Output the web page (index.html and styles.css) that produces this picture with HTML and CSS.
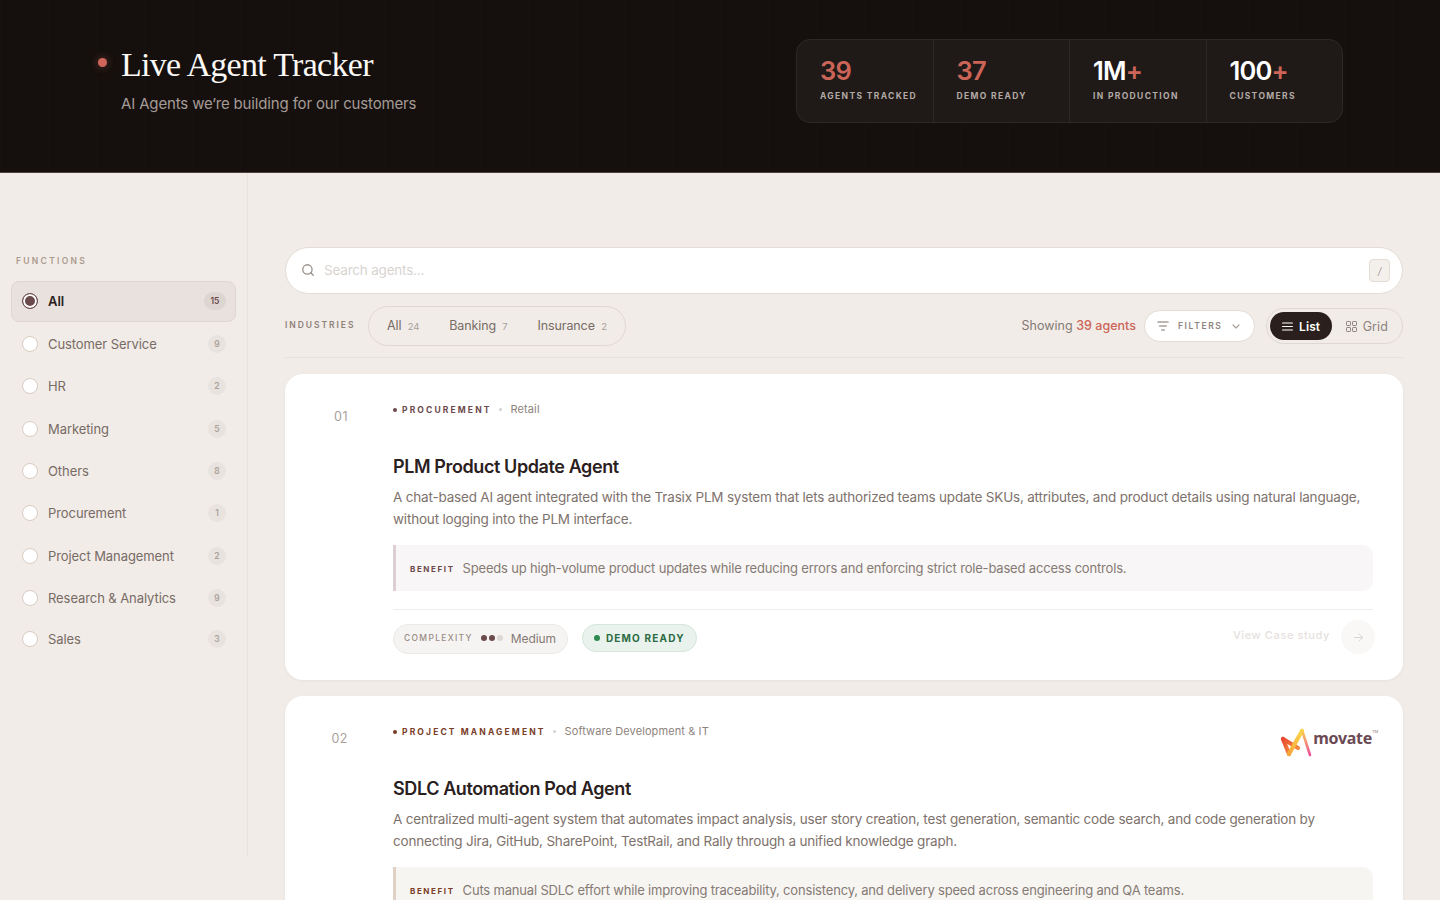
FILE: index.html
```html
<!DOCTYPE html>
<html lang="en">
  <head>
    <meta charset="UTF-8" />
    <meta name="viewport" content="width=device-width, initial-scale=1.0" />
    <title>Live Agent Tracker</title>
    <link rel="stylesheet" href="styles.css">
  </head>
  <body>
    <header class="hero">
      <div class="hero-title">
        <span class="live-dot"></span>
        <div>
          <h1>Live Agent Tracker</h1>
          <p>AI Agents we’re building for our customers</p>
        </div>
      </div>
      <div class="stats">
        <div class="stat">
          <div class="stat-num accent">39</div>
          <div class="stat-label">AGENTS TRACKED</div>
        </div>
        <div class="stat">
          <div class="stat-num accent">37</div>
          <div class="stat-label">DEMO READY</div>
        </div>
        <div class="stat">
          <div class="stat-num">1M<span class="accent">+</span></div>
          <div class="stat-label">IN PRODUCTION</div>
        </div>
        <div class="stat">
          <div class="stat-num">100<span class="accent">+</span></div>
          <div class="stat-label">CUSTOMERS</div>
        </div>
      </div>
    </header>

    <div class="page">
      <aside class="sidebar">
        <div class="side-title">FUNCTIONS</div>
        <div class="fn fn-active"><span class="radio"></span><span class="fn-name">All</span><span class="fn-count">15</span></div>
        <div class="fn"><span class="radio"></span><span class="fn-name">Customer Service</span><span class="fn-count">9</span></div>
        <div class="fn"><span class="radio"></span><span class="fn-name">HR</span><span class="fn-count">2</span></div>
        <div class="fn"><span class="radio"></span><span class="fn-name">Marketing</span><span class="fn-count">5</span></div>
        <div class="fn"><span class="radio"></span><span class="fn-name">Others</span><span class="fn-count">8</span></div>
        <div class="fn"><span class="radio"></span><span class="fn-name">Procurement</span><span class="fn-count">1</span></div>
        <div class="fn"><span class="radio"></span><span class="fn-name">Project Management</span><span class="fn-count">2</span></div>
        <div class="fn"><span class="radio"></span><span class="fn-name">Research &amp; Analytics</span><span class="fn-count">9</span></div>
        <div class="fn fn-last"><span class="radio"></span><span class="fn-name">Sales</span><span class="fn-count">3</span></div>
      </aside>

      <main class="main">
        <div class="search">
          <svg class="search-icon" width="14" height="14" viewBox="0 0 24 24" fill="none" stroke="#9a8f89" stroke-width="2.2" stroke-linecap="round"><circle cx="11" cy="11" r="8"></circle><path d="M21 21l-4.3-4.3"></path></svg>
          <span class="search-text">Search agents...</span>
          <span class="kbd">/</span>
        </div>

        <div class="toolbar">
          <span class="ind-title">INDUSTRIES</span>
          <div class="ind-pills">
            <span class="ind">All <small>24</small></span>
            <span class="ind">Banking <small>7</small></span>
            <span class="ind">Insurance <small>2</small></span>
          </div>
          <span class="showing">Showing <b>39 agents</b></span>
          <div class="filters">
            <svg width="12" height="10" viewBox="0 0 12 10" fill="none" stroke="#7d716b" stroke-width="1.2" stroke-linecap="round"><path d="M.8 1h10.4M2.6 5h6.8M4.6 9h2.8"></path></svg>
            <span>FILTERS</span>
            <svg width="8" height="5" viewBox="0 0 8 5" fill="none" stroke="#a79c96" stroke-width="1.1" stroke-linecap="round" stroke-linejoin="round"><path d="M1 1l3 3 3-3"></path></svg>
          </div>
          <div class="view-toggle">
            <span class="view view-on">
              <svg width="11" height="9" viewBox="0 0 11 9" fill="none" stroke="#fff" stroke-width="1.2" stroke-linecap="round"><path d="M.6 1h9.8M.6 4.500h9.800M.6 8h9.800"></path></svg>
              List
            </span>
            <span class="view">
              <svg width="11" height="11" viewBox="0 0 11 11" fill="none" stroke="#8d817b" stroke-width="1"><rect x=".5" y=".5" width="4" height="4" rx=".7"></rect><rect x="6.500" y=".5" width="4" height="4" rx=".7"></rect><rect x=".5" y="6.500" width="4" height="4" rx=".7"></rect><rect x="6.500" y="6.500" width="4" height="4" rx=".7"></rect></svg>
              Grid
            </span>
          </div>
        </div>

        <article class="card">
          <div class="card-num">01</div>
          <div class="card-body">
            <div class="meta">
              <span class="meta-dot"></span><span class="meta-fn">PROCUREMENT</span>
              <span class="meta-sep"></span><span class="meta-ind">Retail</span>
            </div>
            <h3>PLM Product Update Agent</h3>
            <p class="desc">A chat-based AI agent integrated with the Trasix PLM system that lets authorized teams update SKUs, attributes, and product details using natural language, without logging into the PLM interface.</p>
            <div class="benefit"><span class="benefit-tag">BENEFIT</span>Speeds up high-volume product updates while reducing errors and enforcing strict role-based access controls.</div>
            <div class="card-foot">
              <span class="complexity">
                <span class="cx-label">COMPLEXITY</span>
                <span class="cx-dots"><i></i><i></i><i class="off"></i></span>
                Medium
              </span>
              <span class="status"><i></i>DEMO READY</span>
              <span class="case-link">View Case study</span>
              <span class="case-arrow">
                <svg width="11" height="11" viewBox="0 0 24 24" fill="none" stroke="#d9d2ce" stroke-width="2" stroke-linecap="round" stroke-linejoin="round"><path d="M3 12h18M13 4l8 8-8 8"></path></svg>
              </span>
            </div>
          </div>
        </article>

        <article class="card">
          <div class="card-num">02</div>
          <div class="card-body">
            <div class="logo">
              <svg width="33" height="30" viewBox="0 0 33 30" fill="none" stroke-width="4.200" stroke-linecap="round" stroke-linejoin="round">
                <defs>
                  <linearGradient id="mvA" x1="0" y1="0" x2="1" y2="1"><stop offset="0" stop-color="#e8472f"></stop><stop offset="1" stop-color="#f58a3c"></stop></linearGradient>
                  <linearGradient id="mvB" x1="0" y1="1" x2="1" y2="0"><stop offset="0" stop-color="#f7a63b"></stop><stop offset="1" stop-color="#fbd94a"></stop></linearGradient>
                  <linearGradient id="mvC" x1="0" y1="0" x2="0" y2="1"><stop offset="0" stop-color="#fbd24a"></stop><stop offset="1" stop-color="#ec4f9c"></stop></linearGradient>
                </defs>
                <path d="M3 12l15 9" stroke="url(#mvA)"></path>
                <path d="M3 12l6 15" stroke="url(#mvA)"></path>
                <path d="M9 27L22 4" stroke="url(#mvB)"></path>
                <path d="M22 3l8 25" stroke="url(#mvC)" stroke-width="2.600"></path>
              </svg>
              <span class="logo-text">movate</span><span class="logo-tm">TM</span>
            </div>
            <div class="meta">
              <span class="meta-dot brown"></span><span class="meta-fn brown">PROJECT MANAGEMENT</span>
              <span class="meta-sep"></span><span class="meta-ind">Software Development &amp; IT</span>
            </div>
            <h3>SDLC Automation Pod Agent</h3>
            <p class="desc">A centralized multi-agent system that automates impact analysis, user story creation, test generation, semantic code search, and code generation by connecting Jira, GitHub, SharePoint, TestRail, and Rally through a unified knowledge graph.</p>
            <div class="benefit benefit-tan"><span class="benefit-tag">BENEFIT</span>Cuts manual SDLC effort while improving traceability, consistency, and delivery speed across engineering and QA teams.</div>
          </div>
        </article>
      </main>
    </div>
  </body>
</html>
```

FILE: styles.css
```css
* {
  box-sizing: border-box;
}

html,
body {
  height: 100%;
}

body {
  margin: 0;
  overflow: hidden;
  background-color: #f1ece8;
  font-family: Inter, "Noto Sans", sans-serif;
  color: #2a201d;
}

/* top band */
.hero {
  height: 173px;
  padding: 39px 97px 0 98px;
  display: flex;
  justify-content: space-between;
  align-items: flex-start;
  background-color: #15100d;
  background-image: repeating-linear-gradient(90deg, rgba(255, 255, 255, 0.008) 0 1px, transparent 1px 48px);
  border-bottom: 1px solid #4a4340;
}

.hero-title {
  display: flex;
  align-items: flex-start;
  gap: 14px;
  padding-top: 5px;
}

.live-dot {
  width: 9px;
  height: 9px;
  margin-top: 14px;
  border-radius: 50%;
  background-color: #d0665a;
  box-shadow: 0 0 8px rgba(208, 102, 90, 0.45);
}

.hero h1 {
  margin: 0;
  font-family: "Liberation Serif", serif;
  font-size: 34px;
  line-height: 42px;
  font-weight: 400;
  letter-spacing: -0.7px;
  color: #fbf8f5;
}

.hero p {
  margin: 8px 0 0;
  font-size: 15px;
  line-height: 20px;
  letter-spacing: -0.15px;
  color: #a59b96;
}

.stats {
  display: flex;
  width: 547px;
  height: 84px;
  background-color: #1f1917;
  border: 1px solid #2e2825;
  border-radius: 14px;
}

.stat {
  flex: 1;
  padding: 14px 0 0 23px;
  border-left: 1px solid #2e2825;
}

.stat:first-child {
  border-left: 0;
}

.stat-num {
  font-size: 25.500px;
  line-height: 33px;
  font-weight: 600;
  letter-spacing: -0.8px;
  color: #fff;
}

.accent {
  color: #cc6557;
}

.stat-label {
  margin-top: 3px;
  font-size: 8.500px;
  line-height: 12px;
  font-weight: 700;
  letter-spacing: 1.35px;
  color: #b3aaa5;
}

/* page columns */
.page {
  display: flex;
  align-items: flex-start;
}

.sidebar {
  width: 248px;
  height: 683px;
  flex-shrink: 0;
  padding: 82px 11px 0;
  border-right: 1px solid #e9e3de;
}

.side-title {
  margin: 0 0 13.600px 5px;
  font-size: 8.500px;
  line-height: 12px;
  font-weight: 600;
  letter-spacing: 2.3px;
  color: #ab9a8d;
}

.fn {
  height: 42.400px;
  padding: 0 10px 0 11px;
  display: flex;
  align-items: center;
  font-size: 13px;
  letter-spacing: -0.08px;
  color: #786b65;
}

.fn-last {
  height: 39px;
}

.fn-active {
  height: 41px;
  margin-bottom: 1px;
  background-color: #e9e1dd;
  border: 1px solid #e0d6d1;
  border-radius: 8px;
  padding: 0 9px 0 10px;
  font-weight: 560;
  color: #2a201d;
}

.radio {
  width: 16px;
  height: 16px;
  margin-right: 10px;
  flex-shrink: 0;
  background-color: #fff;
  border: 1px solid #d9ccc0;
  border-radius: 50%;
}

.fn-active .radio {
  border: 1.500px solid #6b4a4c;
  background-color: #6b4a4c;
  box-shadow: inset 0 0 0 2px #fff;
}

.fn-name {
  flex: 1;
}

.fn-count {
  min-width: 18px;
  height: 18px;
  padding: 0 4px;
  display: flex;
  align-items: center;
  justify-content: center;
  background-color: #e8e3df;
  border-radius: 9px;
  font-size: 8.500px;
  font-weight: 600;
  letter-spacing: 0;
  color: #aaa19b;
}

.fn-active .fn-count {
  min-width: 22px;
  background-color: #ddd5d0;
  color: #6b4a4c;
}

.main {
  flex: 1;
  padding: 74px 37px 0;
  min-width: 0;
}

/* search + filters */
.search {
  height: 47px;
  padding: 0 12px 0 15px;
  display: flex;
  align-items: center;
  background-color: #fff;
  border: 1px solid #e4dcd4;
  border-radius: 24px;
}

.search-icon {
  flex-shrink: 0;
  margin-bottom: 1px;
}

.search-text {
  flex: 1;
  margin-left: 9px;
  padding-bottom: 1px;
  font-size: 13.500px;
  letter-spacing: -0.2px;
  color: #d9d4d0;
}

.kbd {
  width: 21px;
  height: 23px;
  display: flex;
  align-items: center;
  justify-content: center;
  background-color: #f3efeb;
  border: 1px solid #e4dcd4;
  border-radius: 4px;
  font-size: 10px;
  font-style: italic;
  color: #a59a94;
}

.toolbar {
  height: 64px;
  margin-bottom: 16px;
  padding-top: 12px;
  display: flex;
  align-items: flex-start;
  border-bottom: 1px solid #e7e1dc;
}

.ind-title {
  width: 83px;
  margin-top: 13px;
  font-size: 8.500px;
  line-height: 13px;
  font-weight: 600;
  letter-spacing: 1.95px;
  color: #8f8078;
}

.ind-pills {
  height: 40px;
  padding: 0 18px 2px;
  display: flex;
  align-items: center;
  gap: 30px;
  border: 1px solid #e0d8d0;
  border-radius: 20px;
}

.ind {
  font-size: 12.500px;
  letter-spacing: -0.12px;
  color: #786b65;
}

.ind small {
  margin-left: 3px;
  font-size: 9.500px;
  color: #a89e98;
}

.showing {
  margin-left: auto;
  margin-top: 11px;
  font-size: 12.500px;
  line-height: 18px;
  letter-spacing: 0.02px;
  color: #857a74;
}

.showing b {
  font-weight: 500;
  color: #cc6557;
}

.filters {
  width: 111px;
  height: 32px;
  margin: 4px 11px 0 8px;
  padding: 0 14px 0 12px;
  display: flex;
  align-items: center;
  gap: 9px;
  background-color: #fff;
  border: 1px solid #e4dcd4;
  border-radius: 16px;
  font-size: 8.500px;
  font-weight: 600;
  letter-spacing: 1.6px;
  color: #8f837d;
}

.filters svg {
  flex-shrink: 0;
}

.filters span {
  flex: 1;
}

.view-toggle {
  width: 137px;
  height: 36px;
  margin-top: 2px;
  padding: 2px 3px;
  display: flex;
  align-items: center;
  border: 1px solid #e0d8d0;
  border-radius: 18px;
}

.view {
  height: 28px;
  padding: 0 11px;
  display: flex;
  align-items: center;
  gap: 6px;
  border-radius: 14px;
  font-size: 12.500px;
  letter-spacing: 0.1px;
  color: #8d817b;
}

.view-on {
  width: 62px;
  padding: 0 0 0 12px;
  background-color: #2a1f1c;
  font-size: 12px;
  font-weight: 600;
  color: #fff;
}

.view-toggle .view:last-child {
  padding-left: 12px;
  margin-left: 2px;
}

/* agent cards */
.card {
  margin-bottom: 16px;
  padding: 26px 30px 26px 0;
  display: flex;
  background-color: #fff;
  border-radius: 18px;
  box-shadow: 0 1px 3px rgba(90, 70, 60, 0.06);
}

.card-num {
  width: 108px;
  padding: 9px 45px 0 0;
  flex-shrink: 0;
  text-align: right;
  font-size: 12.500px;
  line-height: 16px;
  letter-spacing: 0.5px;
  color: #a9a19c;
}

.card-body {
  position: relative;
  flex: 1;
  min-width: 0;
}

.meta {
  height: 19px;
  display: flex;
  align-items: center;
  font-size: 8.500px;
}

.meta-dot {
  width: 4px;
  height: 4px;
  margin-right: 5px;
  border-radius: 50%;
  background-color: #6b4a4c;
}

.meta-fn {
  font-weight: 700;
  letter-spacing: 2.13px;
  color: #6b4a4c;
}

.meta-dot.brown {
  background-color: #7a3d28;
}

.meta-fn.brown {
  color: #7a3d28;
}

.meta-sep {
  width: 3px;
  height: 3px;
  margin: 0 9px 0 7px;
  border-radius: 50%;
  background-color: #d6d0cc;
}

.meta-ind {
  padding-bottom: 1px;
  font-size: 11px;
  letter-spacing: 0.1px;
  color: #8d837d;
}

.card h3 {
  margin: 35px 0 0;
  font-size: 18px;
  line-height: 26px;
  font-weight: 560;
  letter-spacing: -0.4px;
  color: #2a201d;
}

.desc {
  margin: 6px 0 0;
  font-size: 13.500px;
  line-height: 22px;
  letter-spacing: -0.19px;
  color: #7e726c;
}

.benefit {
  height: 46px;
  margin-top: 15px;
  padding: 0 14px 1px;
  display: flex;
  align-items: center;
  background-color: #f8f6f6;
  border-left: 3px solid #dccfd1;
  border-radius: 0 10px 10px 0;
  font-size: 13px;
  letter-spacing: -0.18px;
  color: #857a74;
}

.benefit-tan {
  background-color: #f7f5f2;
  border-left-color: #e0d0c6;
}

.benefit-tag {
  margin-right: 8px;
  padding-top: 2px;
  font-size: 8px;
  font-weight: 700;
  letter-spacing: 1.6px;
  color: #6b4a4c;
}

.benefit-tan .benefit-tag {
  color: #7a3d28;
}

.card-foot {
  margin-top: 18px;
  padding-top: 14px;
  display: flex;
  align-items: flex-start;
  border-top: 1px solid #f0ecea;
}

.complexity {
  height: 30px;
  padding: 0 11px 2px 10px;
  display: flex;
  align-items: center;
  background-color: #f6f4f3;
  border: 1px solid #ece8e5;
  border-radius: 15px;
  font-size: 12px;
  letter-spacing: -0.1px;
  color: #857a74;
}

.cx-label {
  font-size: 8.500px;
  font-weight: 500;
  letter-spacing: 1.3px;
  color: #9a8c85;
}

.cx-dots {
  margin: 0 8px;
  display: flex;
  gap: 2px;
}

.cx-dots i {
  width: 6px;
  height: 6px;
  border-radius: 50%;
  background-color: #6b4a4c;
}

.cx-dots i.off {
  background-color: #dcd8d5;
}

.status {
  height: 28px;
  margin-left: 14px;
  padding: 0 11px 0 11px;
  display: flex;
  align-items: center;
  background-color: #e9f2ec;
  border: 1px solid #d5e6da;
  border-radius: 14px;
  font-size: 10px;
  font-weight: 700;
  letter-spacing: 1.2px;
  color: #2d6a43;
}

.status i {
  width: 6px;
  height: 6px;
  margin-right: 6px;
  border-radius: 50%;
  background-color: #2f8a50;
}

.case-link {
  margin-left: auto;
  margin-top: 4px;
  font-size: 11px;
  font-weight: 500;
  letter-spacing: 0.6px;
  color: #e6e1de;
}

.case-arrow {
  width: 34px;
  height: 34px;
  margin: -4px -2px 0 11px;
  display: flex;
  align-items: center;
  justify-content: center;
  background-color: #faf8f7;
  border-radius: 50%;
}

/* customer logo sits in the card corner */
.logo {
  position: absolute;
  top: 5px;
  right: -3px;
  display: flex;
  align-items: flex-start;
}

.logo-text {
  margin-top: 1px;
  font-family: "Noto Sans", sans-serif;
  font-size: 16px;
  line-height: 20px;
  font-weight: 700;
  letter-spacing: -0.3px;
  color: #6b4a55;
}

.logo-tm {
  width: 4px;
  font-size: 4px;
  line-height: 10px;
  color: #8d7a80;
}
```
